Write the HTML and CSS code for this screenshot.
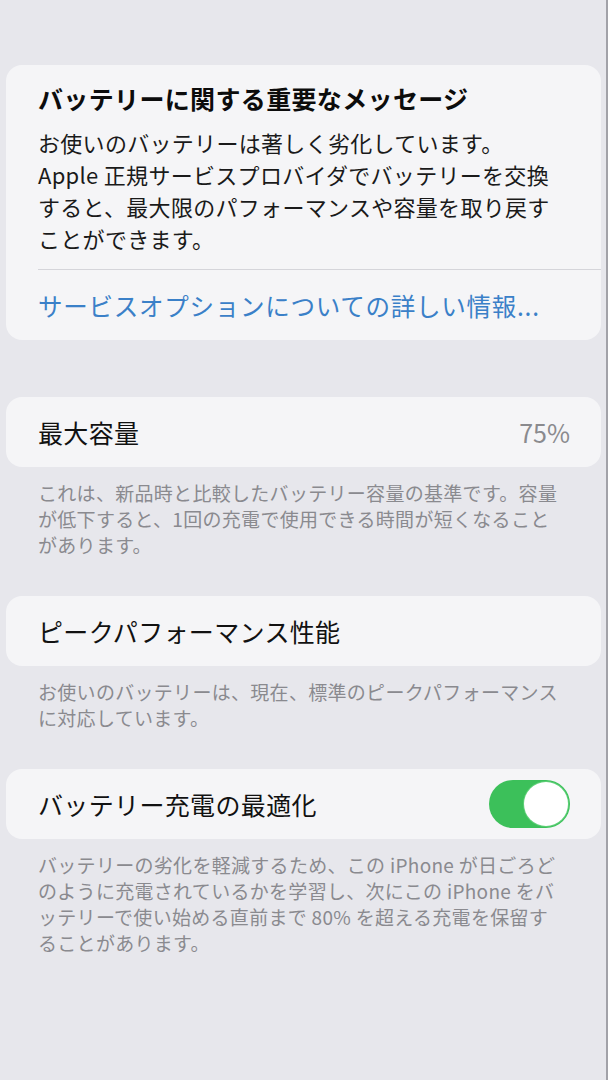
FILE: index.html
```html
<!DOCTYPE html>
<html lang="ja">
<head>
<meta charset="utf-8">
<title>バッテリー</title>
<link rel="stylesheet" href="styles.css">
</head>
<body>
<div class="page">
  <section class="card card-message">
    <h1 class="msg-title">バッテリーに関する重要なメッセージ</h1>
    <p class="msg-body">お使いのバッテリーは著しく劣化しています。<br>Apple 正規サービスプロバイダでバッテリーを交換<br>すると、最大限のパフォーマンスや容量を取り戻す<br>ことができます。</p>
    <div class="sep"></div>
    <a class="msg-link">サービスオプションについての詳しい情報...</a>
  </section>

  <section class="card row">
    <span class="row-label">最大容量</span>
    <span class="row-value">75%</span>
  </section>
  <p class="footnote">これは、新品時と比較したバッテリー容量の基準です。容量<br>が低下すると、1回の充電で使用できる時間が短くなること<br>があります。</p>

  <section class="card row">
    <span class="row-label">ピークパフォーマンス性能</span>
  </section>
  <p class="footnote">お使いのバッテリーは、現在、標準のピークパフォーマンス<br>に対応しています。</p>

  <section class="card row">
    <span class="row-label">バッテリー充電の最適化</span>
    <span class="toggle"><span class="knob"></span></span>
  </section>
  <p class="footnote">バッテリーの劣化を軽減するため、この iPhone が日ごろど<br>のように充電されているかを学習し、次にこの iPhone をバ<br>ッテリーで使い始める直前まで 80% を超える充電を保留す<br>ることがあります。</p>
</div>
</body>
</html>
```

FILE: styles.css
```css
* { box-sizing: border-box; }
html, body { margin: 0; padding: 0; }
body {
  background: #e7e7ec;
  font-family: "Noto Sans CJK JP", "Noto Sans", sans-serif;
  color: #111;
}
.page {
  width: 608px;
  min-height: 1080px;
  padding: 65px 5px 0 6px;
  border-right: 2px solid #a2a2a8;
}
.card {
  background: #f5f5f7;
  border-radius: 16px;
}
.card-message {
  padding: 17px 0 0 32px;
}
.msg-title {
  margin: 0;
  font-size: 25px;
  line-height: 32px;
  font-weight: 700;
  letter-spacing: 0.35px;
  color: #0c0c0c;
}
.msg-body {
  margin: 12px 0 0;
  font-size: 22px;
  line-height: 32px;
  letter-spacing: 0.3px;
  color: #1a1a1a;
  padding-bottom: 15px;
}
.sep {
  height: 1px;
  background: #d5d5da;
}
.msg-link {
  display: block;
  padding: 20px 0 18px;
  font-size: 24.5px;
  line-height: 32px;
  letter-spacing: 0.75px;
  color: #3a80c8;
}
.row {
  height: 70px;
  display: flex;
  align-items: center;
  justify-content: space-between;
  padding: 0 31px 0 32px;
  margin-top: 57px;
}
.footnote + .row { margin-top: 38px; }
.row-label {
  font-size: 25px;
  line-height: 32px;
  letter-spacing: 0.35px;
  color: #111;
}
.row-value {
  font-size: 25px;
  line-height: 32px;
  color: #8a8a8e;
}
.footnote {
  margin: 13px 0 0;
  padding-left: 32px;
  font-size: 19px;
  line-height: 26px;
  letter-spacing: 0.3px;
  color: #8a8a8f;
}
.toggle {
  width: 81px;
  height: 48px;
  border-radius: 24px;
  background: #3cc05a;
  display: flex;
  align-items: center;
  justify-content: flex-end;
  padding: 2px;
}
.knob {
  width: 44px;
  height: 44px;
  border-radius: 50%;
  background: #fff;
  box-shadow: 0 0 0 1px #5fcf78;
}
```
